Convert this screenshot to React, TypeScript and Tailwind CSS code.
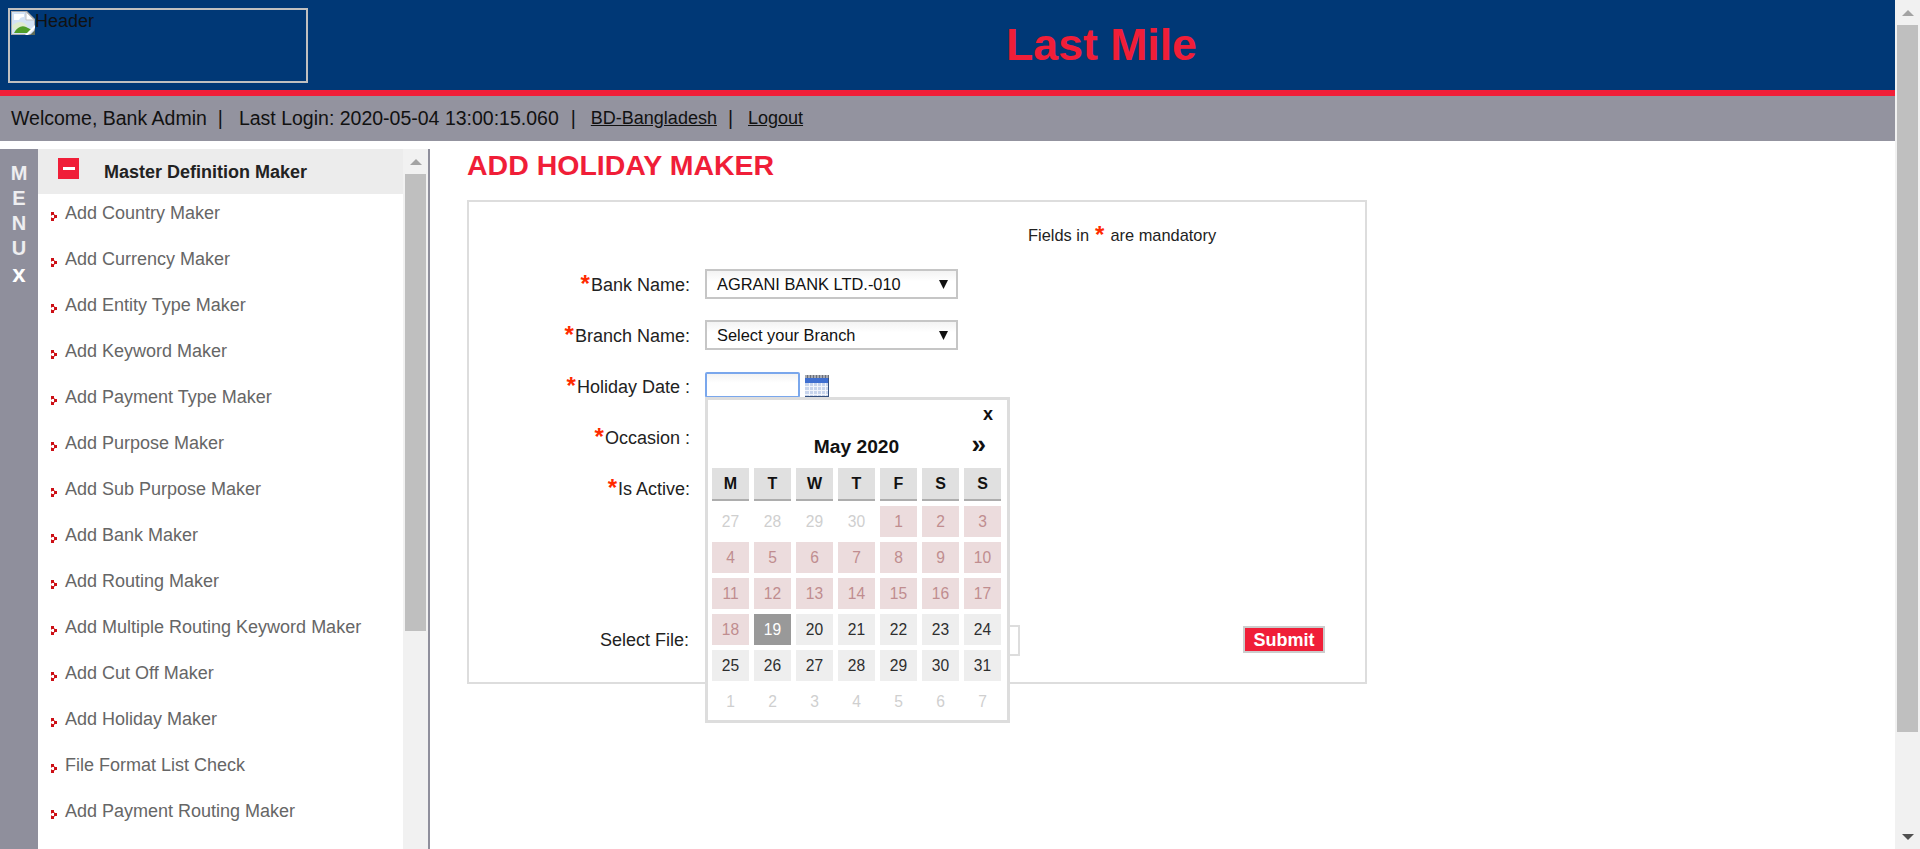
const menuItems = [
  "Add Country Maker",
  "Add Currency Maker",
  "Add Entity Type Maker",
  "Add Keyword Maker",
  "Add Payment Type Maker",
  "Add Purpose Maker",
  "Add Sub Purpose Maker",
  "Add Bank Maker",
  "Add Routing Maker",
  "Add Multiple Routing Keyword Maker",
  "Add Cut Off Maker",
  "Add Holiday Maker",
  "File Format List Check",
  "Add Payment Routing Maker",
]

const weekDays = ["M", "T", "W", "T", "F", "S", "S"]

type DayKind = "out" | "off" | "open" | "today"

const days: { n: number; kind: DayKind }[] = [
  ...[27, 28, 29, 30].map((n) => ({ n, kind: "out" as DayKind })),
  ...Array.from({ length: 18 }, (_, i) => ({ n: i + 1, kind: "off" as DayKind })),
  { n: 19, kind: "today" as DayKind },
  ...Array.from({ length: 12 }, (_, i) => ({ n: i + 20, kind: "open" as DayKind })),
  ...[1, 2, 3, 4, 5, 6, 7].map((n) => ({ n, kind: "out" as DayKind })),
]

const dayClass: Record<DayKind, string> = {
  out: "bg-white text-[#cfcfcf]",
  off: "bg-[#ecdcdd] text-[#c08d8f]",
  open: "bg-[#eeeeee] text-[#2e2e2e]",
  today: "bg-[#999999] text-white",
}

const Bullet = () => (
  <svg width="6" height="10" viewBox="0 0 6 10" className="shrink-0">
    <path d="M0 0h3v3H0zM3 3h3v3H3zM0 6h3v3H0z" fill="#cc1016" />
    <path d="M0 3h1v1H0zM0 5h1v1H0zM3 2h1v1H3zM3 6h1v1H3z" fill="#e88a8c" />
  </svg>
)

const BrokenImage = () => (
  <svg width="24" height="24" viewBox="0 0 24 24" className="shrink-0">
    <path d="M0 0h16l8 8v16H0z" fill="#a9a9a9" />
    <path d="M1 1h14l8 8v14H1z" fill="#d3e2f4" />
    <path d="M3 3h10v3c-3 0-4 1-5 3H3z" fill="#ffffff" />
    <path d="M15 1l8 8h-8z" fill="#ffffff" stroke="#c3c3c3" strokeWidth="1" />
    <path d="M1 15c4-4 8-5 12-3l4 3-14 4z" fill="#dfeccf" />
    <path d="M3 22c3-6 8-8 12-6l6 3-3 3z" fill="#4f9e2a" />
    <path d="M14 24l10-10v3l-7 7z" fill="#ffffff" />
    <path d="M19 24l5-5v5z" fill="#5f6b58" />
  </svg>
)

const CalendarIcon = () => (
  <svg width="24" height="22" viewBox="0 0 24 22" className="shrink-0">
    <rect x="0" y="0" width="24" height="3" fill="#6b6f78" />
    <path d="M1 0v3M4 0v3M7 0v3M10 0v3M13 0v3M16 0v3M19 0v3M22 0v3" stroke="#e4e6ea" strokeWidth="1" />
    <rect x="0" y="3" width="24" height="5" fill="#3f6fd0" />
    <rect x="0" y="8" width="24" height="14" fill="#c7d4ec" />
    <path d="M4.5 8v14M8.5 8v14M12.5 8v14M16.5 8v14M20.5 8v14M0 11.5h24M0 15.5h24M0 19.5h24" stroke="#f2f5fb" strokeWidth="1" />
    <path d="M0 21.5h24M23.5 3v19" stroke="#34507f" strokeWidth="1" />
  </svg>
)

const Caret = () => (
  <svg width="9" height="9" viewBox="0 0 9 9" className="shrink-0">
    <path d="M0 0h9L4.5 9z" fill="#111111" />
  </svg>
)

const Label = ({ text }: { text: string }) => (
  <div className="w-[221px] -mr-[1px] mt-[1px] h-[30px] flex justify-end items-center text-[18px] text-[#222222]">
    <span className="text-[#ff2a00] text-[24px] font-bold leading-[20px] mr-[1px] mt-[-2px]">*</span>
    <span>{text}</span>
  </div>
)

const FakeSelect = ({ value }: { value: string }) => (
  <div className="w-[253px] h-[30px] border-2 border-[#c6c6c6] bg-gradient-to-b from-[#f3f3f3] to-white to-40% flex items-center justify-between pl-[10px] pr-[8px] text-[16.4px] text-[#111111]">
    <span>{value}</span>
    <Caret />
  </div>
)

const Calendar = () => (
  <div className="absolute left-0 top-[26px] w-[305px] h-[326px] border-[3px] border-[#dddddd] bg-white pl-[4px] z-10">
    <div className="h-[29px] flex items-center justify-end pr-[14px] text-[18px] font-bold text-[#111111]">x</div>
    <div className="h-[39px] pb-[3px] grid grid-cols-[1fr_auto_1fr] items-center pr-[6px]">
      <span />
      <span className="text-[19.2px] font-bold text-[#111111]">May 2020</span>
      <span className="justify-self-end pr-[15px] mt-[-7px] text-[26px] leading-[24px] font-bold text-[#111111]">»</span>
    </div>
    <div className="grid grid-cols-[repeat(7,37px)] gap-x-[5px] gap-y-[5px]">
      {weekDays.map((d, i) => (
        <div
          key={i}
          className="h-[33px] bg-[#e0e0e0] border-b-2 border-[#adadad] flex items-center justify-center text-[16px] font-bold text-[#111111]"
        >
          {d}
        </div>
      ))}
      {days.map((d, i) => (
        <div
          key={i}
          className={`h-[31px] flex items-center justify-center text-[15.6px] ${dayClass[d.kind]}`}
        >
          {d.n}
        </div>
      ))}
    </div>
  </div>
)

const Sidebar = () => (
  <aside className="w-[430px] shrink-0 flex border-r-2 border-[#8f8f9c] overflow-hidden">
    <div className="w-[38px] shrink-0 bg-[#8f8f9c] flex flex-col items-center pt-[12px] text-white/85 text-[20px] font-bold leading-[25px]">
      <span>M</span>
      <span>E</span>
      <span>N</span>
      <span>U</span>
      <span className="text-[24px] text-white">x</span>
    </div>
    <div className="w-[365px] shrink-0 flex flex-col">
      <div className="h-[45px] shrink-0 bg-[#ececec] flex items-center pl-[20px]">
        <div className="w-[21px] h-[21px] bg-[#f01e38] flex items-center justify-center mt-[-7px]">
          <div className="w-[12px] h-[3px] bg-white" />
        </div>
        <span className="ml-[25px] mt-[2px] text-[18px] font-bold text-[#222222]">Master Definition Maker</span>
      </div>
      {menuItems.map((item) => (
        <div key={item} className="h-[46px] shrink-0 flex items-center pl-[13px] gap-[8px]">
          <Bullet />
          <span className="text-[18px] text-[#666666] mt-[-7px]">{item}</span>
        </div>
      ))}
    </div>
    <div className="w-[25px] shrink-0 bg-[#f1f1f1] flex flex-col items-center">
      <div className="h-[25px] shrink-0 flex items-center justify-center">
        <svg width="12" height="6" viewBox="0 0 12 6">
          <path d="M6 0l6 6H0z" fill="#a3a3a3" />
        </svg>
      </div>
      <div className="w-[21px] h-[457px] bg-[#bfbfbf]" />
    </div>
  </aside>
)

const HolidayForm = () => (
  <section className="flex-1 pl-[37px]">
    <h1 className="text-[28.5px] leading-[32px] font-bold text-[#f01e38]">ADD HOLIDAY MAKER</h1>
    <div className="w-[900px] h-[484px] mt-[19px] border-2 border-[#dddddd] pt-[18px]">
      <div className="ml-[559px] h-[30px] flex items-center text-[16.4px] text-[#222222]">
        Fields in
        <span className="text-[#ff2a00] text-[24px] font-bold leading-[20px] mx-[6px]">*</span>
        are mandatory
      </div>
      <div className="mt-[19px] flex flex-col gap-[21px]">
        <div className="flex gap-[16px] h-[30px]">
          <Label text="Bank Name:" />
          <FakeSelect value="AGRANI BANK LTD.-010" />
        </div>
        <div className="flex gap-[16px] h-[30px]">
          <Label text="Branch Name:" />
          <FakeSelect value="Select your Branch" />
        </div>
        <div className="flex gap-[16px] h-[30px]">
          <Label text="Holiday Date :" />
          <div className="relative flex gap-[5px] items-start pt-[1px]">
            <div className="w-[95px] h-[26px] border-2 border-[#7aa7ec] rounded-[2px] bg-gradient-to-b from-[#f3f3f3] to-white to-40%" />
            <div className="pt-[3px]">
              <CalendarIcon />
            </div>
            <Calendar />
          </div>
        </div>
        <div className="flex gap-[16px] h-[30px]">
          <Label text="Occasion :" />
        </div>
        <div className="flex gap-[16px] h-[30px]">
          <Label text="Is Active:" />
        </div>
      </div>
      <div className="mt-[122px] flex items-start">
        <div className="w-[220px] h-[30px] flex justify-end items-center text-[18px] text-[#222222]">Select File:</div>
        <div className="ml-[16px] w-[315px] h-[31px] border-2 border-[#dddddd]" />
        <button className="ml-[223px] mt-[1px] w-[82px] h-[27px] border-2 border-[#cccccc] bg-[#f01e38] text-white text-[18px] leading-[22px] font-bold">
          Submit
        </button>
      </div>
    </div>
  </section>
)

export default function App() {
  return (
    <div className="h-[849px] w-full flex overflow-hidden bg-white font-['Liberation_Sans',Arial,sans-serif]">
      <div className="flex-1 min-w-0 flex flex-col">
        <header className="h-[90px] shrink-0 bg-[#003876] flex items-start">
          <div className="ml-[8px] mt-[8px] w-[300px] h-[75px] border-2 border-[#c0c0c0] flex items-start pl-[1px] pt-[1px] text-[18px] leading-[20px] text-[#111111]">
            <BrokenImage />
            Header
          </div>
          <div className="flex-1 h-full flex items-center justify-center text-[44.6px] font-bold text-[#f01e38]">
            Last Mile
          </div>
        </header>
        <div className="h-[6px] shrink-0 bg-[#f01e38]" />
        <nav className="h-[45px] shrink-0 bg-[#93939f] flex items-center pl-[11px] text-[19.5px] text-[#111111]">
          <span>Welcome, Bank Admin</span>
          <span className="ml-[11px] mr-[16px]">|</span>
          <span>Last Login: 2020-05-04 13:00:15.060</span>
          <span className="mx-[12px]">|</span>
          <a className="underline ml-[3px] text-[18px]">BD-Bangladesh</a>
          <span className="ml-[11px] mr-[12px]">|</span>
          <a className="underline ml-[3px] text-[18px]">Logout</a>
        </nav>
        <div className="flex-1 min-h-0 mt-[8px] flex">
          <Sidebar />
          <HolidayForm />
        </div>
      </div>
      <div className="w-[25px] shrink-0 bg-[#f1f1f1] flex flex-col items-center">
        <div className="h-[25px] shrink-0 flex items-center justify-center">
          <svg width="12" height="6" viewBox="0 0 12 6">
            <path d="M6 0l6 6H0z" fill="#a3a3a3" />
          </svg>
        </div>
        <div className="w-[21px] h-[707px] bg-[#bfbfbf]" />
        <div className="mt-auto h-[25px] shrink-0 flex items-center justify-center">
          <svg width="12" height="6" viewBox="0 0 12 6">
            <path d="M0 0h12L6 6z" fill="#505050" />
          </svg>
        </div>
      </div>
    </div>
  )
}
